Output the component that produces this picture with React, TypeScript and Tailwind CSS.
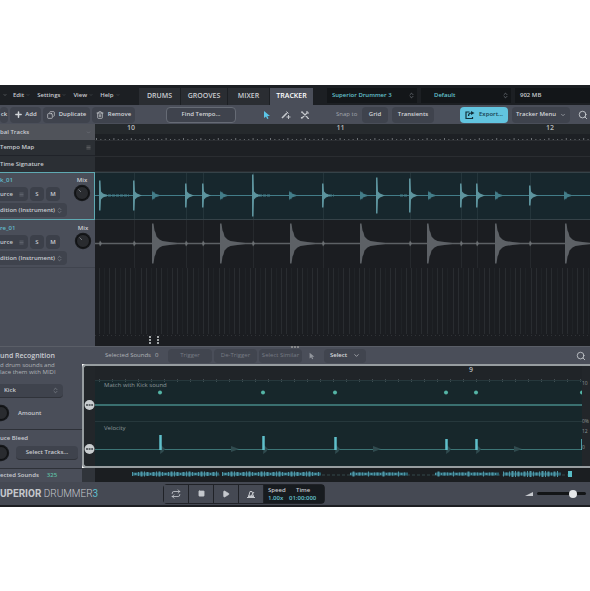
import type { ReactNode } from 'react';
import { ChevronDown, ChevronsUpDown, Copy, Menu, Play, Plus, Repeat, Search, Square, Trash2 } from 'lucide-react';

const KICK_HITS = [
  [5, 15], [39, 15], [91, 12], [108, 12], [158, 21], [228, 12], [282, 18], [315, 17], [366, 12], [382, 12], [435, 10],
];
const KICK_GHOSTS = [58, 126, 195, 266, 334, 401, 470];
const SNARE_HITS = [57, 125, 195, 265, 332, 400, 470];
const GUIDES = [39, 91, 108, 158, 228, 315, 366, 382, 435];
const SOUNDS = [
  [65, 15], [168, 14], [240, 13], [351, 11], [381, 11], [487, 11],
];
const OVERVIEW = [[37, 124], [127, 226], [255, 313], [340, 404], [408, 466]];

const range = (n: number) => Array.from({ length: n }, (_, i) => i);

const hit = (x: number, c: number, h: number) =>
  `M${x - 1} ${c - h}h1.5L${x + 1} ${c - 4}L${x + 3} ${c - 2}L${x + 8} ${c}L${x + 3} ${c + 2}L${x + 1} ${c + 4}L${x + 0.5} ${c + h}h-1.5z`;

const ghost = (x: number, c: number) =>
  `M${x - 1} ${c - 5}l1 2l1-1l1 2l3 1l3 1l-3 1l-3 1l-1 2l-1-1l-1 2z`;

const boom = (x: number, c: number) =>
  `M${x} ${c - 20}h1.5l1 7l1 2l1 4l3 3l3 1.5l7 1l8 1v1l-8 1l-7 1l-3 1.5l-3 3l-1 4l-1 2l-1 7h-1.5z`;

const ToolButton = ({ children, className = '' }: { children: ReactNode; className?: string }) => (
  <button className={`flex h-4 shrink-0 items-center justify-center gap-1 rounded-sm bg-[#3f434d] ${className}`}>
    {children}
  </button>
);

const Picker = ({ label, value, className = '' }: { label: string; value: string; className?: string }) => (
  <div className={`flex items-center ${className}`}>
    <select aria-label={label} className="h-full min-w-0 flex-1 appearance-none bg-transparent outline-none">
      <option>{value}</option>
    </select>
    <ChevronsUpDown size={7} className="shrink-0 text-[#8b9099]" />
  </div>
);

const Knob = ({ label }: { label: string }) => (
  <svg role="img" aria-label={label} className="size-[18px] shrink-0" viewBox="0 0 18 18">
    <circle cx="9" cy="9" r="8.2" fill="#17191c" />
    <circle cx="9" cy="9" r="6.5" fill="#292b2f" stroke="#0f1012" />
    <path d="M5.5 5.5L8 8" stroke="#73777d" />
  </svg>
);

const Track = ({ name, selected = false }: { name: string; selected?: boolean }) => (
  <div className={`flex h-12 justify-between border-y bg-[#4a4e59] pr-[3px] ${selected ? 'border-r border-[#5fa9b2]' : 'border-transparent border-b-[#40444e]'}`}>
    <div className="flex flex-col">
      <span className="h-3.5 pt-[3px] leading-2 text-[#62bccb]">{name}</span>
      <div className="flex h-3.5 gap-0.5">
        <button className="flex w-7 items-center justify-between rounded-r-sm bg-[#3c404a] pr-1">
          urce <Menu size={5} className="text-[#8b9099]" />
        </button>
        <button className="w-3.5 rounded-sm bg-[#3c404a]">S</button>
        <button className="w-3.5 rounded-sm bg-[#3c404a]">M</button>
      </div>
      <Picker label="Output" value="dition (Instrument)" className="mt-0.5 h-3.5 w-[67px] rounded-r-sm bg-[#3f434d] pr-1" />
    </div>
    <div className="flex flex-col items-center pt-[3px]">
      <span className="leading-2">Mix</span>
      <Knob label="Mix" />
    </div>
  </div>
);

const MenuBar = () => (
  <header className="flex h-5 items-end bg-[#1c1f23]">
    <nav className="flex h-5 w-[139px] shrink-0 items-center gap-[7px] pl-[3px]">
      <ChevronDown size={4} className="-mr-px" />
      {['Edit', 'Settings', 'View', 'Help'].map((item) => (
        <button key={item} className="flex items-center gap-0.5">
          {item}
          <ChevronDown size={4} className="text-[#777b82]" />
        </button>
      ))}
    </nav>
    <nav className="flex h-[17px] shrink-0 gap-px text-[7px]">
      <button className="w-[41px] bg-[#2a2d32]">DRUMS</button>
      <button className="w-[46px] bg-[#2a2d32]">GROOVES</button>
      <button className="w-[41px] bg-[#2a2d32]">MIXER</button>
      <button className="w-[43px] bg-[#4a4e59] text-white">TRACKER</button>
    </nav>
    <div className="ml-3.5 flex h-[17px] min-w-0 flex-1 gap-1 pb-0.5 text-[#64c3cf]">
      <Picker label="Library" value="Superior Drummer 3" className="w-[90px] bg-[#131619] pr-0.5 pl-[5px]" />
      <Picker label="Preset" value="Default" className="w-[90px] bg-[#131619] pr-0.5 pl-[13px]" />
      <div className="flex flex-1 items-center bg-[#131619] pl-[5px] text-[#c6c9cd]">902 MB</div>
    </div>
  </header>
);

const Toolbar = () => (
  <div className="flex h-[19px] items-center gap-0.5 overflow-hidden bg-[#4a4e59] text-[#d3d6da]">
    <ToolButton className="w-2">ck</ToolButton>
    <ToolButton className="w-[31px]"><Plus size={9} strokeWidth={4} className="-mr-0.5" />Add</ToolButton>
    <ToolButton className="w-[47px]"><Copy size={8} className="-scale-x-100" />Duplicate</ToolButton>
    <ToolButton className="w-[43px]"><Trash2 size={8} />Remove</ToolButton>
    <ToolButton className="ml-[29px] w-[70px] border border-[#666b75]">Find Tempo...</ToolButton>
    <div className="ml-6 flex w-[48px] shrink-0 justify-between">
      <button aria-label="Select tool">
        <svg className="size-2.5" viewBox="0 0 10 10"><path d="M2 1v7l2-1.5L5.2 9l1.3-.6L5.3 6H8z" fill="#5cc6e8" /></svg>
      </button>
      <button aria-label="Draw tool">
        <svg className="size-2.5" viewBox="0 0 10 10" fill="none" stroke="#c5c8cd"><path d="M1 8l5-5" strokeWidth="1.6" /><path d="M5.5 1.5l2 2M7.5 5v4M5.5 7h4" /></svg>
      </button>
      <button aria-label="Cut tool">
        <svg className="size-2.5" viewBox="0 0 10 10" fill="none" stroke="#c5c8cd" strokeWidth="1.2"><path d="M2.5 2.5l5.5 5.5M7 3l-5.5 5.5M1 2.2h2M7 1v2h2M1.5 7v1.5M7.5 8.5h1.5" /></svg>
      </button>
    </div>
    <span className="ml-6 w-6 shrink-0 whitespace-nowrap font-normal text-[#a2a6ad]">Snap to</span>
    <ToolButton className="w-[26px]">Grid</ToolButton>
    <ToolButton className="ml-0.5 w-[42px]">Transients</ToolButton>
    <ToolButton className="ml-6 w-12 bg-[#62c4df]! text-[#17414e]">
      <svg className="size-2.5" viewBox="0 0 10 10" fill="none" stroke="#12303a" strokeWidth="1.2"><path d="M4.5 2H1v6.5h6.5V7M3.5 6q0-3 3-3" /><path d="M6 1l3.5 2L6 5z" fill="#12303a" stroke="none" /></svg>
      Export...
    </ToolButton>
    <ToolButton className="ml-0.5 w-[58px]">Tracker Menu <ChevronDown size={6} /></ToolButton>
    <button aria-label="Zoom" className="ml-auto pr-0.5"><Search size={10} /></button>
  </div>
);

const Ruler = () => (
  <div className="h-12 bg-[#1d2024]">
    <div className="flex h-2.5 justify-between bg-[#25292c] pr-9 pl-8 text-[7px] leading-2 text-[#b8bbbf]">
      <span>10</span><span>11</span><span>12</span>
    </div>
    <svg className="h-[38px] w-full" viewBox="0 0 495 38" preserveAspectRatio="none">
      {range(114).map((i) => (
        <path key={i} d={`M${1.5 + i * 4.35} 6v${i % 4 === 0 ? -2 : -1}`} stroke="#6d7175" />
      ))}
      <path d="M0 6.5H495M0 22.5H495M0 37.5H495" stroke="#2a2d31" />
    </svg>
  </div>
);

const Arrangement = () => (
  <div className="flex min-w-0 flex-1 flex-col bg-[#1b1d21]">
    <Ruler />
    <svg className="h-12 w-full bg-[#17272d]" viewBox="0 0 495 48" preserveAspectRatio="none">
      {GUIDES.map((x) => <path key={x} d={`M${x + 0.5} 0V48`} stroke="#24353b" />)}
      <path d="M0 .5H495M0 47.5H495" stroke="#354248" />
      <path d="M0 23.5H495" stroke="#437d89" />
      <path d="M9 23.5H34M160 23.5H176M230 23.5H239M305 23.5H313" stroke="#437d89" strokeWidth="2" strokeDasharray="3 1" />
      {KICK_HITS.map(([x, h]) => <path key={x} d={hit(x, 23.5, h)} fill="#5d949e" />)}
      {KICK_GHOSTS.map((x) => <path key={x} d={ghost(x, 23.5)} fill="#437d89" />)}
    </svg>
    <svg className="h-12 w-full" viewBox="0 0 495 48" preserveAspectRatio="none">
      {GUIDES.map((x) => <path key={x} d={`M${x + 0.5} 0V48`} stroke="#26292d" />)}
      <path d="M0 23.5H495" stroke="#5d6165" strokeWidth="1.5" />
      {SNARE_HITS.map((x) => <path key={x} d={boom(x, 23.5)} fill="#5d6166" />)}
      {[5, ...GUIDES].map((x) => <path key={x} d={`M${x - 1} 23.5l1-3l2 3l-2 3z`} fill="#6b6f73" />)}
    </svg>
    <svg className="h-[66px] w-full" viewBox="0 0 495 66" preserveAspectRatio="none">
      {range(95).map((i) => (
        <path key={i} d={`M${4.5 + Math.round(i * 5.2)} 0V66`} stroke={i % 3 === 1 ? '#202327' : '#292c30'} />
      ))}
    </svg>
    <svg className="h-3 w-full" viewBox="0 0 495 12" preserveAspectRatio="none">
      <path d="M0 1.5H495" stroke="#303337" strokeDasharray="1 3" />
      <path d="M55 2v9M63 2v9" stroke="#a1a5a7" strokeWidth="2" strokeDasharray="2 1" />
    </svg>
  </div>
);

const TrackList = () => (
  <aside className="flex w-[95px] shrink-0 flex-col bg-[#4a4e59]">
    <div className="flex h-4 items-center justify-between bg-[#50535a] pr-1">bal Tracks <ChevronDown size={5} className="text-[#82868c]" /></div>
    <div className="flex h-4 items-center justify-between border-b border-[#202329] bg-[#2b2f34] pr-1">Tempo Map <Menu size={5} className="text-[#999]" /></div>
    <div className="flex h-4 items-center bg-[#2b2f34]">Time Signature</div>
    <Track name="k_01" selected />
    <Track name="re_01" />
  </aside>
);

const SelectionBar = () => (
  <div className="relative flex h-[18px] items-center border-t border-[#5a5e67] bg-[#4a4e59] pl-[23px] font-normal text-[#b0b3b8]">
    <span className="w-[50px] shrink-0 whitespace-nowrap">Selected Sounds</span>
    <span className="w-[13px] shrink-0">0</span>
    <div className="flex gap-0.5 text-[#777b84]">
      <button className="h-3.5 w-11 rounded-sm bg-[#41454f]">Trigger</button>
      <button className="h-3.5 w-[43px] rounded-sm bg-[#41454f]">De-Trigger</button>
      <button className="h-3.5 w-[43px] rounded-sm bg-[#41454f] whitespace-nowrap">Select Similar</button>
      <button aria-label="Pick" className="h-3.5 w-4 pl-1">
        <svg className="size-2" viewBox="0 0 10 10"><path d="M2 1v7l2-1.5L5.2 9l1.3-.6L5.3 6H8z" fill="#92969d" /></svg>
      </button>
      <button className="ml-0.5 flex h-3.5 w-[42px] items-center justify-center gap-1.5 rounded-sm bg-[#41454f] font-semibold text-[#d9dbde]">Select <ChevronDown size={7} /></button>
    </div>
    <svg className="absolute -top-px left-[209px] h-0.5 w-2" viewBox="0 0 8 2"><path d="M0 1h8" stroke="#999" strokeWidth="1.5" strokeDasharray="2 1" /></svg>
    <button aria-label="Zoom" className="ml-auto pr-1 text-[#c9ccd1]"><Search size={10} /></button>
  </div>
);

const Editor = () => (
  <div className="flex h-[104px] overflow-hidden rounded-l-sm border-y-2 border-l-2 border-[#979da0] bg-[#22262a] text-[#8e989b]">
    <svg className="h-full w-[11px] shrink-0" viewBox="0 0 11 100">
      {[39, 83].map((y) => (
        <g key={y}>
          <circle cx="5.5" cy={y} r="5" fill="#c9cdd0" />
          <path d={`M2 ${y}h7`} stroke="#3c4246" strokeWidth="1.6" strokeDasharray="2 .6" />
        </g>
      ))}
    </svg>
    <div className="relative min-w-0 flex-1 bg-[#17272b]">
      <svg className="absolute inset-0 h-full w-full" viewBox="0 0 487 100" preserveAspectRatio="none">
        <rect width="487" height="14" fill="#202428" />
        <path d="M4 14.5H487" stroke="#69777a" strokeWidth="2" strokeDasharray="1 12" />
        <path d="M0 14.5H487M0 55.5H487" stroke="#26383c" />
        <path d="M0 39H487" stroke="#3a7070" strokeWidth="2" />
        <path d="M0 83.5H487" stroke="#3d7576" />
        {[140, 282, 423].map((x) => <path key={x} d={`M${x - 4} 80l8 3l-8 3z`} fill="#304b4f" />)}
        {SOUNDS.map(([x, h]) => (
          <g key={x}>
            <path d={`M${x + 1} 79l4 4l-2 3l-3 2z`} fill="#304b4f" />
            <circle cx={x} cy="26.5" r="2" fill="#54b5a6" />
            <path d={`M${x + 0.5} ${84 - h}V84`} stroke="#5fc0cb" strokeWidth="2.5" />
          </g>
        ))}
      </svg>
      <div className="relative flex flex-col">
        <span className="h-[15px] self-end pr-[109px] text-[7px] leading-2 text-[#b8bbbf]">9</span>
        <span className="h-[43px] pl-[9px] leading-2 font-normal">Match with Kick sound</span>
        <span className="pl-[9px] leading-2 font-normal">Velocity</span>
      </div>
    </div>
    <div className="flex w-2 shrink-0 flex-col pt-3.5 text-[5px] font-normal">
      <span className="h-[38px]">10</span>
      <span className="h-2.5">0%</span>
      <span className="h-4">12</span>
      <span>0</span>
    </div>
  </div>
);

const Overview = () => (
  <svg className="h-3.5 w-full bg-[#1b1e21]" viewBox="0 0 508 14" preserveAspectRatio="none">
    <rect width="13" height="14" fill="#30343a" />
    <path d="M50 7H490" stroke="#35484d" strokeDasharray="3 2" />
    {OVERVIEW.map(([from, to]) => (
      <g key={from} transform="translate(13 0)">
        <path d={`M${from} 6H${to}`} stroke="#2c6371" strokeWidth="3" />
        {range(Math.floor((to - from) / 3)).map((i) => {
          const h = 1 + ((i * i * 7 + i + from) % 5) / 2;
          return <path key={i} d={`M${from + i * 3 + 0.5} ${6 - h}v${h * 2}`} stroke="#4f97a7" strokeWidth={1 + (i % 2)} />;
        })}
      </g>
    ))}
    <path d="M488 3v6" stroke="#58bcc5" strokeWidth="4" />
  </svg>
);

const RecognitionPanel = () => (
  <aside className="flex w-[82px] shrink-0 flex-col overflow-hidden border-t border-[#5a5e67] bg-[#4a4e59] whitespace-nowrap">
    <section className="h-[82px] pt-[5px]">
      <h2 className="text-[7px] leading-2 font-semibold">und Recognition</h2>
      <p className="pt-0.5 leading-[7px] font-normal text-[#b0b3b8]">d drum sounds and<br />lace them with MIDI</p>
      <Picker label="Drum" value="Kick" className="mt-2 h-3.5 w-[63px] rounded-r-sm border-b border-[#30333a] bg-[#3f434d] pr-1 pl-1" />
      <div className="-ml-2 flex items-center gap-2 pt-1.5">
        <Knob label="Amount" />
        <span>Amount</span>
      </div>
    </section>
    <section className="h-[39px] border-t border-[#2e3138] pt-1">
      <h2 className="leading-2">uce Bleed</h2>
      <div className="-ml-2 flex items-center gap-1.5 pt-0.5">
        <Knob label="Reduce bleed" />
        <button className="h-3.5 w-[62px] rounded-sm border-b border-[#30333a] bg-[#3f434d]">Select Tracks...</button>
      </div>
    </section>
    <div className="flex h-3.5 items-center gap-2 border-t border-[#2e3138]">
      <span>ected Sounds</span>
      <span className="text-[#5fc0a5]">325</span>
    </div>
  </aside>
);

const Transport = () => (
  <footer className="flex h-[25px] items-center border-b-2 border-[#1c1e22] bg-[#454953]">
    <div className="w-[163px] shrink-0 font-[Roboto,sans-serif] text-[10px] leading-4 font-light whitespace-nowrap text-[#c5c8cd]">
      <strong className="font-bold">UPERIOR</strong> DRUMMER<strong className="text-[#5fc0cf]">3</strong>
    </div>
    <div className="flex h-5 shrink-0 gap-px rounded-sm border border-[#202227] bg-[#202227] text-[#c5c8cd]">
      <button aria-label="Loop" className="flex w-6 items-center justify-center bg-[#454953]"><Repeat size={10} /></button>
      <button aria-label="Stop" className="flex w-6 items-center justify-center bg-[#454953]"><Square size={7} fill="currentColor" /></button>
      <button aria-label="Play" className="flex w-6 items-center justify-center bg-[#454953]"><Play size={8} fill="currentColor" /></button>
      <button aria-label="Metronome" className="flex w-6 items-center justify-center bg-[#454953]">
        <svg className="size-2.5" viewBox="0 0 10 10" fill="none" stroke="currentColor"><path d="M1 8.5h8M2.5 8l1.5-5.5h2L7.5 8M5 7l3-4" /><path d="M2 6.5h6V9H2z" fill="currentColor" stroke="none" /></svg>
      </button>
      <div className="grid w-[60px] grid-cols-[20px_1fr] content-center bg-[#171b1f] pl-1 leading-2">
        <span>Speed</span><span className="pl-2">Time</span>
        <span className="text-[#64c3cf]">1.00x</span><span className="pl-px text-[#64c3cf]">01:00:000</span>
      </div>
    </div>
    <div className="ml-auto flex items-center gap-1 pr-1">
      <svg className="h-1 w-2" viewBox="0 0 8 4"><path d="M0 4L8 0V4z" fill="#c5c8cd" /></svg>
      <input
        type="range"
        aria-label="Volume"
        defaultValue={78}
        className="h-[3px] w-[49px] appearance-none rounded-full bg-[#131517] [&::-webkit-slider-thumb]:size-2 [&::-webkit-slider-thumb]:appearance-none [&::-webkit-slider-thumb]:rounded-full [&::-webkit-slider-thumb]:bg-[#e5e7e9]"
      />
    </div>
  </footer>
);

export default function App() {
  return (
    <div className="min-h-screen overflow-hidden bg-white pt-[85px] font-['Open_Sans','Noto_Sans',sans-serif] text-[6px] font-semibold text-[#c9ccd1]">
      <MenuBar />
      <Toolbar />
      <main>
        <div className="flex">
          <TrackList />
          <Arrangement />
        </div>
        <div className="flex">
          <RecognitionPanel />
          <div className="flex min-w-0 flex-1 flex-col">
            <SelectionBar />
            <Editor />
            <Overview />
          </div>
        </div>
      </main>
      <Transport />
    </div>
  );
}
